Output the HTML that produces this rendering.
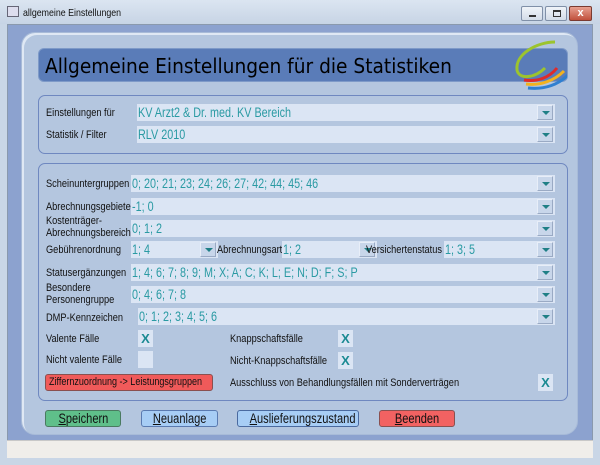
<!DOCTYPE html>
<html><head><meta charset="utf-8"><style>
*{margin:0;padding:0;box-sizing:border-box}
body{width:600px;height:465px;overflow:hidden;background:#c9d6e6;font-family:"Liberation Sans",sans-serif;position:relative}
.abs{position:absolute}
.title{left:0;top:0;width:600px;height:24px;background:linear-gradient(#dbe5f1,#c7d4e5)}
.client{left:7px;top:24px;width:586px;height:434px;background:#8ca2cf;border:1px solid #8a99ad}
.panel{left:21px;top:32px;width:557px;height:403px;background:#b4c6df;border-radius:14px;border:1px solid #a8bbd8;box-shadow:inset 2px 2px 0 #dfe8f4}
.hdr{left:38px;top:48px;width:530px;height:34px;background:#5a7cb8;border-radius:6px;border:1px solid #7e9ac8}
.hdr span{position:absolute;left:6px;top:5px;font-family:"DejaVu Sans",sans-serif;font-size:20px;color:#000;white-space:nowrap;transform:scaleX(0.93);transform-origin:left}
.grp{border:1px solid #6f88c0;border-radius:7px;left:38px;width:530px}
.lbl{font-size:11px;color:#111;line-height:12px;white-space:nowrap;transform:scaleX(0.84);transform-origin:left top}
.cb{height:17px;background:#dbe5f4;color:#2a9aa3;font-size:13.5px;line-height:17px;padding-left:1px;white-space:nowrap;overflow:hidden}
.cb span{display:inline-block;transform:scaleX(0.8);transform-origin:left}
.dd{position:absolute;right:2px;top:1px;width:16px;height:15px;background:#c8d6ea;border:1px solid #e8eef8;border-right-color:#9aaac4;border-bottom-color:#9aaac4}
.dd:after{content:"";position:absolute;left:4px;top:5px;border-left:4px solid transparent;border-right:4px solid transparent;border-top:4px solid #1f7f86}
.chk{width:15px;height:17px;background:#dbe5f4;color:#1b8a93;font-weight:bold;font-size:13px;text-align:center;line-height:17px}
.btn{height:17px;border:1px solid #555;border-radius:3px;font-size:13.5px;text-align:center;line-height:15px;color:#111;white-space:nowrap;overflow:hidden}
.btn span{display:inline-block;transform:scaleX(0.82)}
.status{left:7px;top:440px;width:586px;height:18px;background:#f0eeea;border-top:1px solid #c8c8c8}
</style></head><body>
<div class="abs title"></div>
<div class="abs" style="left:7px;top:6px;width:12px;height:11px;border:1px solid #667;background:#dde"></div>
<div class="abs lbl" style="left:23px;top:7px;font-size:10.5px">allgemeine Einstellungen</div>
<div class="abs" style="left:521px;top:6px;width:22px;height:15px;border:1px solid #8090a8;border-radius:2px;background:linear-gradient(#f0f4f9,#d3dce8)"><div class="abs" style="left:7px;top:8px;width:7px;height:2px;background:#333"></div></div>
<div class="abs" style="left:545px;top:6px;width:22px;height:15px;border:1px solid #8090a8;border-radius:2px;background:linear-gradient(#f0f4f9,#d3dce8)"><div class="abs" style="left:7px;top:3px;width:8px;height:7px;border:1px solid #333;border-top-width:2px"></div></div>
<div class="abs" style="left:569px;top:6px;width:23px;height:15px;border:1px solid #7a3a30;border-radius:2px;background:linear-gradient(#e8a090,#c0503c);color:#fff;font-size:11px;font-weight:bold;text-align:center;line-height:13px">x</div>
<div class="abs client"></div>
<div class="abs status"></div>
<div class="abs panel"></div>
<div class="abs hdr"><span>Allgemeine Einstellungen für die Statistiken</span></div>
<svg class="abs" style="left:497px;top:38px" width="70" height="54" viewBox="0 0 70 54">
<path d="M58 4 C40 4 18 16 20 32 C22 42 38 40 48 30" fill="none" stroke="#9cc42e" stroke-width="3"/>
<path d="M27 42 C40 44 52 40 60 30" fill="none" stroke="#e02a2a" stroke-width="3"/>
<path d="M29 46 C44 48 58 42 67 33" fill="none" stroke="#f2b21e" stroke-width="3"/>
<path d="M31 50 C48 52 62 46 71 37" fill="none" stroke="#2f7fd0" stroke-width="3"/>
</svg>
<div class="abs grp" style="top:95px;height:59px"></div>
<div class="abs grp" style="top:163px;height:238px"></div>

<div class="abs lbl" style="left:46px;top:107px">Einstellungen für</div>
<div class="abs cb" style="left:137px;top:104px;width:418px"><span>KV Arzt2 &amp; Dr. med. KV Bereich</span><div class="dd"></div></div>
<div class="abs lbl" style="left:46px;top:129px">Statistik / Filter</div>
<div class="abs cb" style="left:137px;top:126px;width:418px"><span>RLV 2010</span><div class="dd"></div></div>

<div class="abs lbl" style="left:46px;top:178px">Scheinuntergruppen</div>
<div class="abs cb" style="left:131px;top:175px;width:424px"><span>0; 20; 21; 23; 24; 26; 27; 42; 44; 45; 46</span><div class="dd"></div></div>
<div class="abs lbl" style="left:46px;top:201px">Abrechnungsgebiete</div>
<div class="abs cb" style="left:131px;top:198px;width:424px"><span>-1; 0</span><div class="dd"></div></div>
<div class="abs lbl" style="left:46px;top:215px">Kostenträger-<br>Abrechnungsbereich</div>
<div class="abs cb" style="left:131px;top:220px;width:424px"><span>0; 1; 2</span><div class="dd"></div></div>
<div class="abs lbl" style="left:46px;top:244px">Gebührenordnung</div>
<div class="abs cb" style="left:131px;top:241px;width:87px"><span>1; 4</span><div class="dd"></div></div>
<div class="abs lbl" style="left:217px;top:244px">Abrechnungsart</div>
<div class="abs cb" style="left:282px;top:241px;width:95px"><span>1; 2</span><div class="dd"></div></div>
<div class="abs lbl" style="left:366px;top:244px">Versichertenstatus</div>
<div class="abs cb" style="left:444px;top:241px;width:111px"><span>1; 3; 5</span><div class="dd"></div></div>
<div class="abs lbl" style="left:46px;top:267px">Statusergänzungen</div>
<div class="abs cb" style="left:131px;top:264px;width:424px"><span>1; 4; 6; 7; 8; 9; M; X; A; C; K; L; E; N; D; F; S; P</span><div class="dd"></div></div>
<div class="abs lbl" style="left:46px;top:282px">Besondere<br>Personengruppe</div>
<div class="abs cb" style="left:131px;top:286px;width:424px"><span>0; 4; 6; 7; 8</span><div class="dd"></div></div>
<div class="abs lbl" style="left:46px;top:312px">DMP-Kennzeichen</div>
<div class="abs cb" style="left:138px;top:308px;width:417px"><span>0; 1; 2; 3; 4; 5; 6</span><div class="dd"></div></div>

<div class="abs lbl" style="left:46px;top:333px">Valente Fälle</div>
<div class="abs chk" style="left:138px;top:330px">X</div>
<div class="abs lbl" style="left:46px;top:354px">Nicht valente Fälle</div>
<div class="abs chk" style="left:138px;top:351px"></div>
<div class="abs lbl" style="left:230px;top:333px">Knappschaftsfälle</div>
<div class="abs chk" style="left:338px;top:330px">X</div>
<div class="abs lbl" style="left:230px;top:355px">Nicht-Knappschaftsfälle</div>
<div class="abs chk" style="left:338px;top:352px">X</div>
<div class="abs btn" style="left:45px;top:374px;width:168px;background:#f05a5a;font-size:11px;line-height:15px;border-color:#8a5050;text-align:left;padding-left:3px"><span style="transform:scaleX(0.82);transform-origin:left">Ziffernzuordnung -&gt; Leistungsgruppen</span></div>
<div class="abs lbl" style="left:230px;top:377px">Ausschluss von Behandlungsfällen mit Sonderverträgen</div>
<div class="abs chk" style="left:538px;top:374px">X</div>

<div class="abs btn" style="left:45px;top:410px;width:76px;background:#5fbf8a;border-color:#4a7a60"><span><u>S</u>peichern</span></div>
<div class="abs btn" style="left:141px;top:410px;width:77px;background:#a7cdf5;border-color:#5a7ab0"><span><u>N</u>euanlage</span></div>
<div class="abs btn" style="left:237px;top:410px;width:122px;background:#a7cdf5;border-color:#4a6aa0"><span><u>A</u>uslieferungszustand</span></div>
<div class="abs btn" style="left:379px;top:410px;width:76px;background:#f26262;border-color:#8a5050"><span><u>B</u>eenden</span></div>
</body></html>
